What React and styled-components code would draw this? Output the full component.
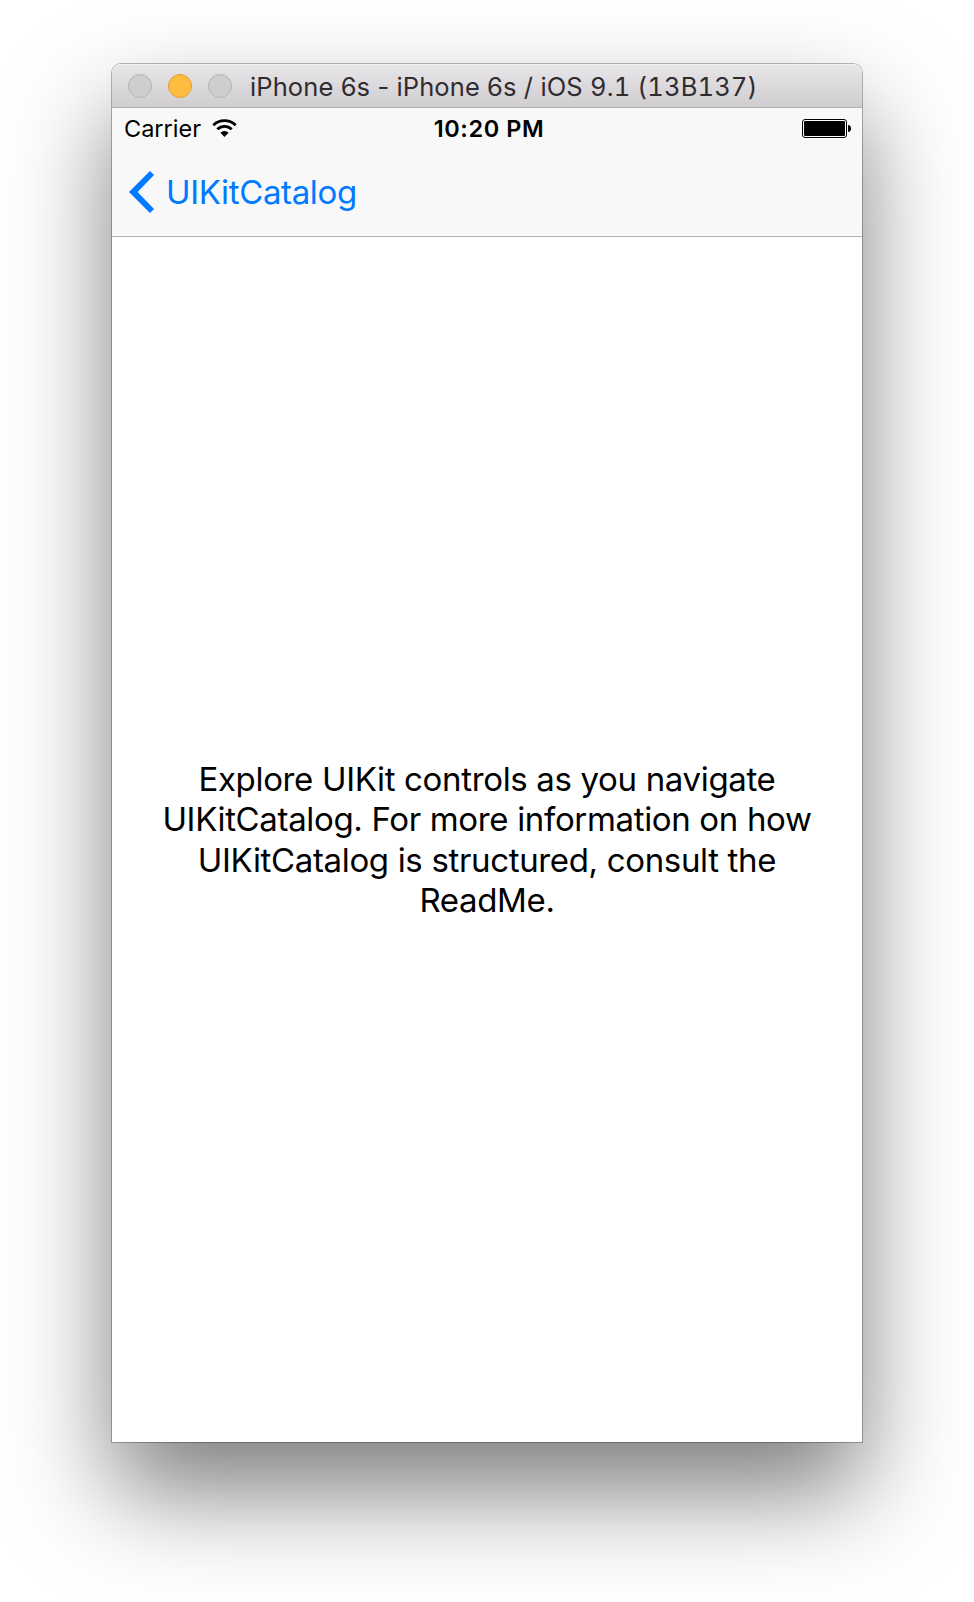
import React from "react";
import styled, { createGlobalStyle } from "styled-components";

const GlobalStyle = createGlobalStyle`
  * { box-sizing: border-box; }
  body { margin: 0; background: #fff; font-family: Inter, "Liberation Sans", sans-serif; }
`;

const Desktop = styled.main`
  height: 1602px;
  padding: 64px 112px 0;
  overflow: hidden;
`;

const Window = styled.div`
  display: flex;
  flex-direction: column;
  width: 750px;
  height: 1378px;
  border-radius: 9px 9px 0 0;
  background: #fff;
  box-shadow: 0 0 0 1px rgba(0, 0, 0, 0.27), 0 50px 100px rgba(0, 0, 0, 0.51);
`;

const TitleBar = styled.header`
  display: flex;
  align-items: center;
  height: 44px;
  padding: 0 16px;
  border-radius: 9px 9px 0 0;
  border-bottom: 1px solid #b1adb1;
  background: linear-gradient(#e9e6e9, #d0cdd0);
  box-shadow: inset 0 1px #f4f2f4;
`;

const Lights = styled.div`
  display: flex;
  gap: 16px;
`;

const Light = styled.span`
  width: 24px;
  height: 24px;
  border-radius: 50%;
  border: 1px solid ${(p) => (p.$active ? "#dfa032" : "#b3b1b3")};
  background: ${(p) => (p.$active ? "#fdbd40" : "#cfcecf")};
`;

const WindowTitle = styled.h1`
  margin: 0 0 0 18px;
  padding-top: 2px;
  font-size: 25.5px;
  font-weight: 400;
  line-height: 40px;
  letter-spacing: 0.1px;
  color: #2f2c30;
  white-space: nowrap;
`;

const Version = styled.span`
  font-variant-numeric: tabular-nums;
  letter-spacing: 0.12px;
`;

const Bars = styled.div`
  height: 129px;
  background: #f8f8f8;
  border-bottom: 1px solid #b2b2b2;
`;

const StatusBar = styled.div`
  display: grid;
  grid-template-columns: 1fr auto 1fr;
  align-items: center;
  height: 40px;
  padding: 1px 11px 0 12px;
  font-size: 23.5px;
  line-height: 39px;
  color: #000;
`;

const Carrier = styled.div`
  display: flex;
  align-items: center;
  gap: 11px;
`;

const Clock = styled.time`
  padding-left: 3px;
  font-weight: 600;
  letter-spacing: 0.6px;
`;

const BatterySlot = styled.div`
  display: flex;
  justify-content: flex-end;
  padding-bottom: 1px;
`;

const BackButton = styled.button`
  display: flex;
  align-items: center;
  gap: 12px;
  height: 88px;
  padding: 0 0 0 17px;
  border: 0;
  background: none;
  font: 400 33px/40px Inter, "Liberation Sans", sans-serif;
  letter-spacing: -0.35px;
  color: #007aff;
`;

const Content = styled.section`
  flex: 1;
  display: flex;
  align-items: center;
  justify-content: center;
`;

const Message = styled.p`
  margin: 0;
  font-size: 33px;
  line-height: 40.4px;
  letter-spacing: -0.34px;
  text-align: center;
  color: #000;
  white-space: nowrap;
`;

const WifiIcon = () => (
  <svg width="25" height="19" viewBox="0 0 26 19" fill="none" stroke="#000">
    <path d="M1.4 6.1a16.4 16.4 0 0 1 23.2 0" strokeWidth="3" />
    <path d="M5.5 10.3a10.6 10.6 0 0 1 15 0" strokeWidth="2.9" />
    <path d="M8.7 13.9a6.1 6.1 0 0 1 8.6 0L13 18.3z" fill="#000" stroke="none" />
  </svg>
);

const BatteryIcon = () => (
  <svg width="49" height="19" viewBox="0 0 49 19">
    <rect x="0.5" y="0.5" width="44" height="18" rx="2.5" fill="#fff" stroke="#000" />
    <rect x="2" y="2" width="41" height="15" rx="1" />
    <path d="M46 6c2 0 3 1.5 3 3.5S48 13 46 13z" />
  </svg>
);

const BackChevron = () => (
  <svg width="25" height="42" viewBox="0 0 25 42">
    <path d="M21 0 25 4 8.6 21 25 38 21 42 0 21z" fill="#007aff" />
  </svg>
);

export default function App() {
  return (
    <>
      <GlobalStyle />
      <Desktop>
        <Window>
          <TitleBar>
            <Lights>
              <Light />
              <Light $active />
              <Light />
            </Lights>
            <WindowTitle>
              iPhone 6s - iPhone 6s / iOS <Version>9.1 (13B137)</Version>
            </WindowTitle>
          </TitleBar>
          <Bars>
            <StatusBar>
              <Carrier>
                <span>Carrier</span>
                <WifiIcon />
              </Carrier>
              <Clock>10:20 PM</Clock>
              <BatterySlot>
                <BatteryIcon />
              </BatterySlot>
            </StatusBar>
            <BackButton>
              <BackChevron />
              <span>UIKitCatalog</span>
            </BackButton>
          </Bars>
          <Content>
            <Message>
              Explore UIKit controls as you navigate
              <br />
              UIKitCatalog. For more information on how
              <br />
              UIKitCatalog is structured, consult the
              <br />
              ReadMe.
            </Message>
          </Content>
        </Window>
      </Desktop>
    </>
  );
}
